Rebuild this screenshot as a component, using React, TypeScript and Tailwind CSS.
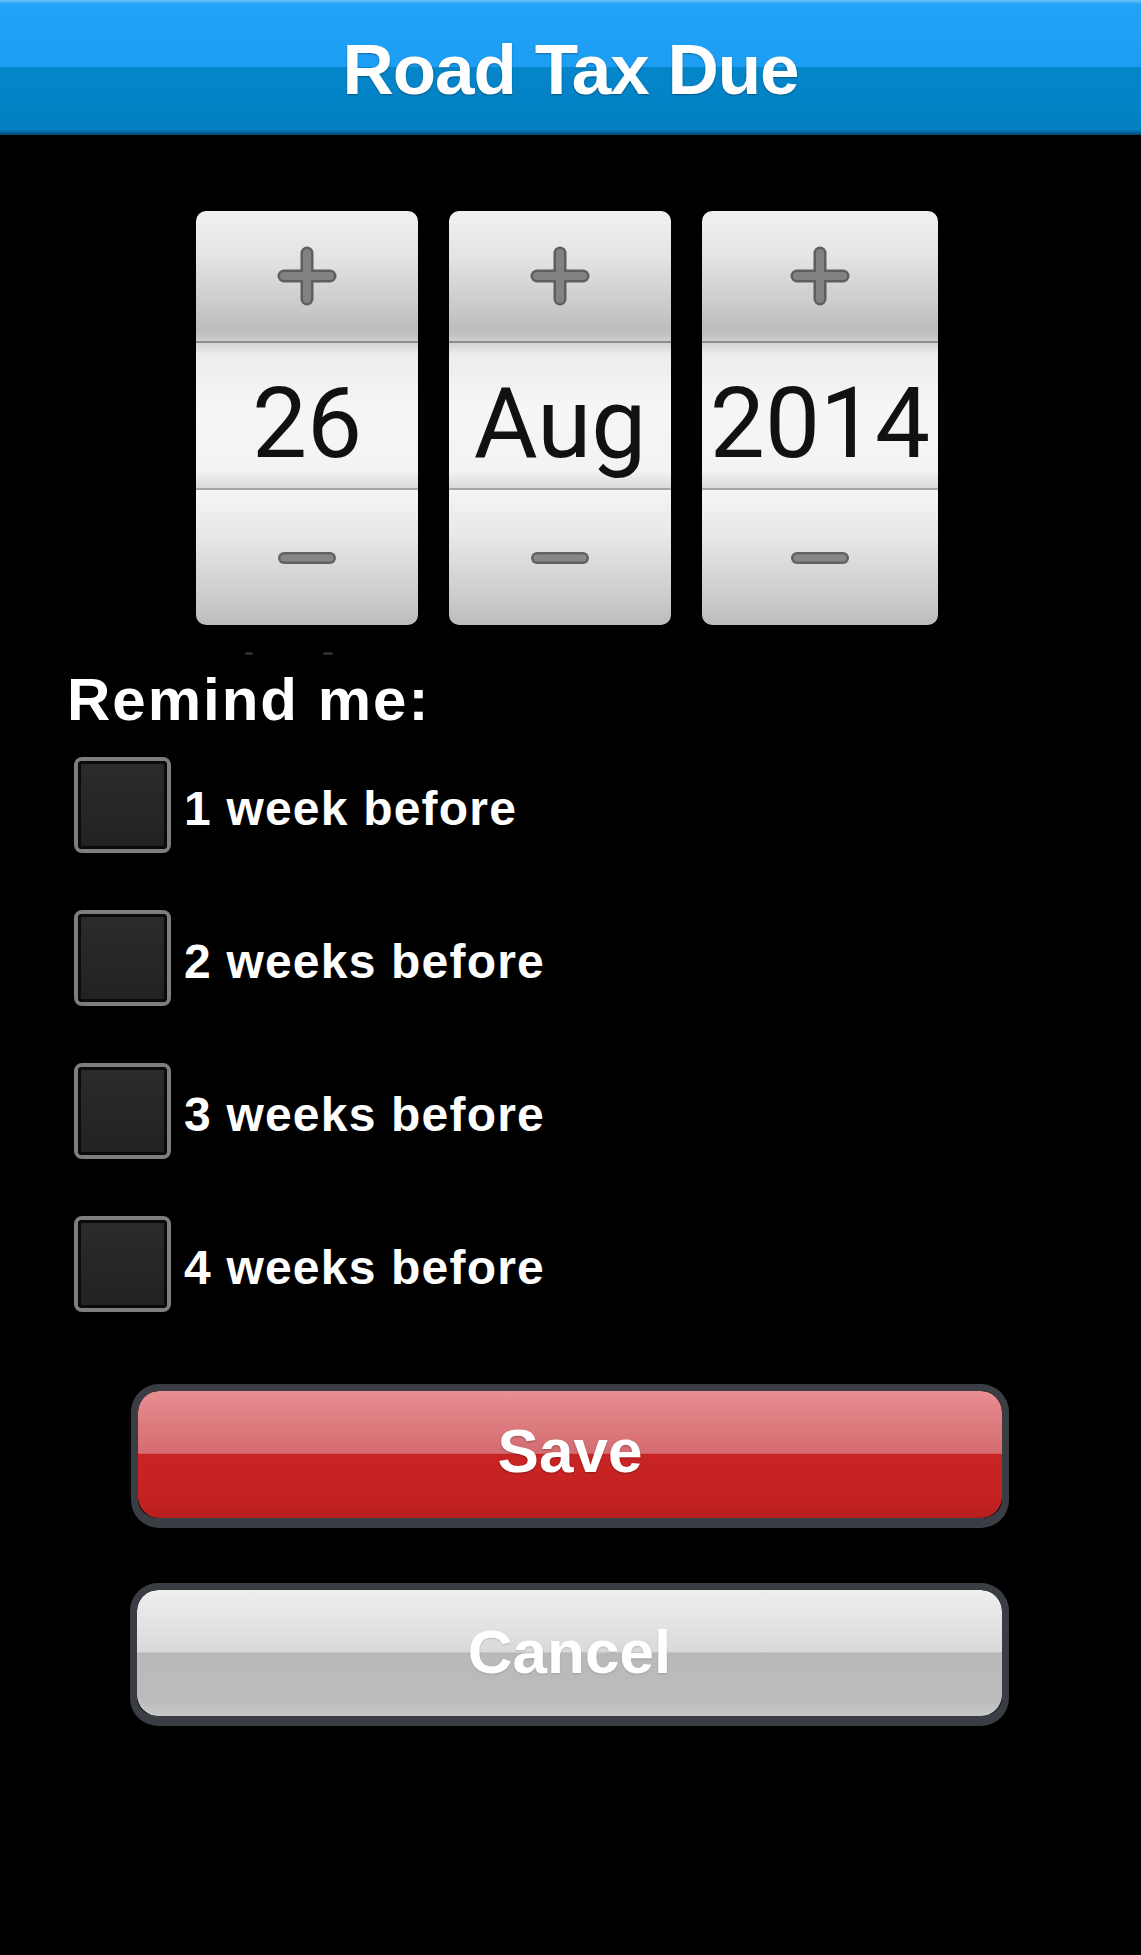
import { useState } from 'react';

const uiFont = "font-['Liberation_Sans',Arial,sans-serif]";

interface SpinnerProps {
  value: string;
  widthClass: string;
}

function PlusIcon() {
  return (
    <svg width="60" height="60" viewBox="0 0 60 60">
      <g strokeLinecap="round">
        <line x1="7" y1="30" x2="53" y2="30" stroke="#5e5e5e" strokeWidth="13" />
        <line x1="30" y1="7" x2="30" y2="53" stroke="#5e5e5e" strokeWidth="13" />
        <line x1="7" y1="30" x2="53" y2="30" stroke="#828282" strokeWidth="8" />
        <line x1="30" y1="7" x2="30" y2="53" stroke="#828282" strokeWidth="8" />
      </g>
    </svg>
  );
}

function MinusIcon() {
  return (
    <svg width="60" height="16" viewBox="0 0 60 16">
      <g strokeLinecap="round">
        <line x1="7" y1="8" x2="53" y2="8" stroke="#626262" strokeWidth="12" />
        <line x1="7" y1="8" x2="53" y2="8" stroke="#878787" strokeWidth="7" />
      </g>
    </svg>
  );
}

function Spinner({ value, widthClass }: SpinnerProps) {
  return (
    <div className={`${widthClass} flex flex-col rounded-[10px] overflow-hidden`}>
      <div className="h-[132px] flex items-center justify-center border-b-2 border-[#8c8c8c] bg-[linear-gradient(to_bottom,#f1f1f1_0%,#e4e4e4_35%,#c9c9c9_75%,#bdbdbd_92%,#cdcdcd_100%)]">
        <PlusIcon />
      </div>
      <div className="h-[147px] flex items-center justify-center pt-[16px] border-b-2 border-[#a6a6a6] bg-[linear-gradient(to_bottom,#d4d4d4_0%,#ececec_8%,#f6f6f6_45%,#f3f3f3_88%,#d9d9d9_100%)]">
        <span className="font-['Roboto',sans-serif] text-[98px] leading-none text-[#111111]">
          {value}
        </span>
      </div>
      <div className="h-[135px] flex items-center justify-center bg-[linear-gradient(to_bottom,#f5f5f5_0%,#e7e7e7_35%,#cbcbcb_80%,#bcbcbc_100%)]">
        <MinusIcon />
      </div>
    </div>
  );
}

const options = ['1 week before', '2 weeks before', '3 weeks before', '4 weeks before'];

export default function App() {
  const [checked, setChecked] = useState<boolean[]>([false, false, false, false]);

  function toggle(i: number) {
    setChecked((prev) => prev.map((c, idx) => (idx === i ? !c : c)));
  }

  return (
    <div className={`min-h-[1955px] w-full bg-black ${uiFont}`}>
      <header className="h-[135px] flex items-center justify-center bg-[linear-gradient(to_bottom,#6cc5fc_0px,#21a3f8_4px,#1d9ef5_50%,#0586cb_50%,#0280c2_96%,#01486f_100%)]">
        <h1 className="pt-[4px] text-[71px] leading-none font-bold tracking-[-1px] text-white [text-shadow:0_1px_2px_rgba(0,0,0,0.35)]">
          Road Tax Due
        </h1>
      </header>

      <div className="mt-[76px] pl-[196px] flex gap-[31px]">
        <Spinner value="26" widthClass="w-[222px]" />
        <Spinner value="Aug" widthClass="w-[222px]" />
        <Spinner value="2014" widthClass="w-[236px]" />
      </div>

      <div className="mt-[27px] h-[3px] flex">
        <div className="ml-[245px] w-[8px] h-[3px] rounded-full bg-[#2e2e2e]" />
        <div className="ml-[70px] w-[10px] h-[3px] rounded-full bg-[#2e2e2e]" />
      </div>

      <p className="mt-[15px] ml-[67px] text-[60px] leading-none font-bold tracking-[2px] text-white">
        Remind me:
      </p>

      <div className="mt-[27px] ml-[74px] flex flex-col gap-[57px]">
        {options.map((label, i) => (
          <label key={label} className="flex items-center gap-[13px] cursor-pointer" onClick={() => toggle(i)}>
            <span className="w-[97px] h-[96px] rounded-[8px] border-[4px] border-[#7e7e7e] flex">
              <span className="flex-1 rounded-[4px] border-[3px] border-[#0b0b0b] bg-[linear-gradient(to_bottom,#2b2b2b,#222222)] flex items-center justify-center text-[60px] leading-none text-[#2f9ff0]">
                {checked[i] ? '✓' : ''}
              </span>
            </span>
            <span className="pt-[8px] text-[48px] leading-none font-bold tracking-[1.2px] text-white">
              {label}
            </span>
          </label>
        ))}
      </div>

      <button className="mt-[72px] ml-[131px] w-[878px] h-[144px] rounded-[28px] border-[7px] border-b-[10px] border-[#3a3e44] overflow-hidden flex">
        <span className="flex-1 rounded-[21px] flex items-center justify-center pb-[8px] bg-[linear-gradient(to_bottom,#e98e91_0%,#df8083_20%,#d46c70_49%,#c92424_50%,#c52222_85%,#b51e1e_100%)] text-[62px] leading-none font-bold text-white [text-shadow:0_1px_2px_rgba(0,0,0,0.3)]">
          Save
        </span>
      </button>

      <button className="block mt-[55px] ml-[130px] w-[879px] h-[143px] rounded-[28px] border-[7px] border-b-[10px] border-[#3a3e44] overflow-hidden flex">
        <span className="flex-1 rounded-[21px] flex items-center justify-center pb-[2px] bg-[linear-gradient(to_bottom,#efefef_0%,#e4e4e5_25%,#d9d9da_49%,#b9b9bb_50%,#bcbcbe_88%,#c9c9cb_100%)] text-[62px] leading-none font-bold text-white [text-shadow:0_1px_2px_rgba(0,0,0,0.15)]">
          Cancel
        </span>
      </button>
    </div>
  );
}
